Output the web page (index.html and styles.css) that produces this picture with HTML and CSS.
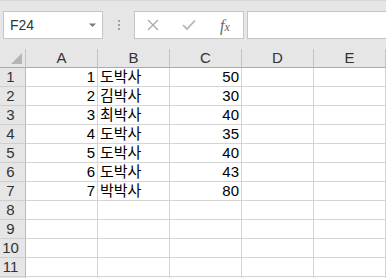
FILE: index.html
```html
<!DOCTYPE html>
<html lang="ko">
<head>
    <meta charset="UTF-8">
    <title>Sheet1</title>
    <link rel="stylesheet" href="styles.css">
</head>
<body>
    <div class="toolbar">
        <div class="namebox">
            <span>F24</span>
            <svg class="arrow" width="8" height="5" viewBox="0 0 8 5"><polygon points="0,0.5 7,0.5 3.5,4" fill="#7a7a7a"/></svg>
        </div>
        <div class="grip"><i></i><i></i><i></i></div>
        <div class="fbuttons">
            <span class="fbtn">
                <svg width="12" height="12" viewBox="0 0 12 12"><path d="M1 1 L11 11 M11 1 L1 11" stroke="#a8a8a8" stroke-width="1.3" fill="none"/></svg>
            </span>
            <span class="fbtn">
                <svg width="14" height="12" viewBox="0 0 14 12"><path d="M1 6 L5 10 L13 1.5" stroke="#b0b0b0" stroke-width="1.6" fill="none"/></svg>
            </span>
            <span class="fbtn fx">f<span class="fx-x">x</span></span>
        </div>
        <div class="formula"></div>
    </div>

    <div class="sheet">
        <div class="hd corner"></div>
        <div class="hd col">A</div>
        <div class="hd col">B</div>
        <div class="hd col">C</div>
        <div class="hd col">D</div>
        <div class="hd col">E</div>

        <div class="hd row">1</div><div class="cell num">1</div><div class="cell txt">도박사</div><div class="cell num">50</div><div class="cell"></div><div class="cell"></div>
        <div class="hd row">2</div><div class="cell num">2</div><div class="cell txt">김박사</div><div class="cell num">30</div><div class="cell"></div><div class="cell"></div>
        <div class="hd row">3</div><div class="cell num">3</div><div class="cell txt">최박사</div><div class="cell num">40</div><div class="cell"></div><div class="cell"></div>
        <div class="hd row">4</div><div class="cell num">4</div><div class="cell txt">도박사</div><div class="cell num">35</div><div class="cell"></div><div class="cell"></div>
        <div class="hd row">5</div><div class="cell num">5</div><div class="cell txt">도박사</div><div class="cell num">40</div><div class="cell"></div><div class="cell"></div>
        <div class="hd row">6</div><div class="cell num">6</div><div class="cell txt">도박사</div><div class="cell num">43</div><div class="cell"></div><div class="cell"></div>
        <div class="hd row">7</div><div class="cell num">7</div><div class="cell txt">박박사</div><div class="cell num">80</div><div class="cell"></div><div class="cell"></div>
        <div class="hd row">8</div><div class="cell"></div><div class="cell"></div><div class="cell"></div><div class="cell"></div><div class="cell"></div>
        <div class="hd row">9</div><div class="cell"></div><div class="cell"></div><div class="cell"></div><div class="cell"></div><div class="cell"></div>
        <div class="hd row">10</div><div class="cell"></div><div class="cell"></div><div class="cell"></div><div class="cell"></div><div class="cell"></div>
        <div class="hd row">11</div><div class="cell"></div><div class="cell"></div><div class="cell"></div><div class="cell"></div><div class="cell"></div>
        <div class="hd row"></div><div class="cell"></div><div class="cell"></div><div class="cell"></div><div class="cell"></div><div class="cell"></div>
    </div>
</body>
</html>
```

FILE: styles.css
```css
body {
    margin: 0;
    width: 386px;
    height: 278px;
    overflow: hidden;
    background-color: #ffffff;
    font-family: "Liberation Sans", "Noto Sans CJK KR", Arial, sans-serif;
}

/* formula bar strip */
.toolbar {
    box-sizing: border-box;
    height: 49px;
    padding-top: 10px;
    border-top: 1px solid #d6d6d6;
    background-color: #e6e6e6;
    display: flex;
    align-items: flex-start;
}
.namebox {
    box-sizing: border-box;
    width: 100px;
    height: 28px;
    margin-left: 3px;
    padding: 0 5px 0 6px;
    background-color: #ffffff;
    border: 1px solid #c6c6c6;
    display: flex;
    align-items: center;
    justify-content: space-between;
    font-size: 14px;
    color: #333333;
}
.namebox .arrow {
    margin-top: 1px;
}
.grip {
    width: 31px;
    height: 28px;
    display: flex;
    flex-direction: column;
    align-items: center;
    justify-content: center;
    gap: 2px;
}
.grip i {
    width: 2px;
    height: 2px;
    background-color: #a0a0a0;
}
.fbuttons {
    box-sizing: border-box;
    width: 110px;
    height: 28px;
    background-color: #ffffff;
    border: 1px solid #c6c6c6;
    display: flex;
}
.fbtn {
    width: 36px;
    display: flex;
    align-items: center;
    justify-content: center;
}
.fbtn.fx {
    font-family: "Liberation Serif", "DejaVu Serif", serif;
    font-style: italic;
    font-size: 16px;
    color: #666666;
    padding-top: 1px;
}
.fx-x {
    font-size: 12px;
    margin-top: 4px;
}
.formula {
    flex: 1;
    height: 28px;
    box-sizing: border-box;
    margin-left: 3px;
    background-color: #ffffff;
    border: 1px solid #c6c6c6;
    border-right: none;
}

/* grid */
.sheet {
    display: grid;
    grid-template-columns: 26px repeat(5, 72px);
    grid-auto-rows: 19px;
    font-size: 15px;
    line-height: 18px;
}
.sheet > div {
    box-sizing: border-box;
    border-right: 1px solid #d4d4d4;
    border-bottom: 1px solid #d4d4d4;
    white-space: nowrap;
    overflow: hidden;
}
.hd {
    background-color: #e6e6e6;
    color: #333333;
    text-align: center;
}
.sheet > .col {
    border-right-color: #c4c4c4;
    border-bottom-color: #ababab;
}
.sheet > .corner {
    position: relative;
    border-right-color: #c4c4c4;
    border-bottom-color: #ababab;
}
.corner::after {
    content: "";
    position: absolute;
    right: 3px;
    bottom: 3px;
    width: 0;
    height: 0;
    border-left: 11px solid transparent;
    border-bottom: 11px solid #b5b5b5;
}
.sheet > .row {
    padding-right: 4px;
    border-right-color: #bcbcbc;
    border-bottom-color: #cfcfcf;
}
.cell {
    color: #000000;
}
.num {
    text-align: right;
    padding-right: 2px;
}
.txt {
    padding-left: 2px;
}
```
